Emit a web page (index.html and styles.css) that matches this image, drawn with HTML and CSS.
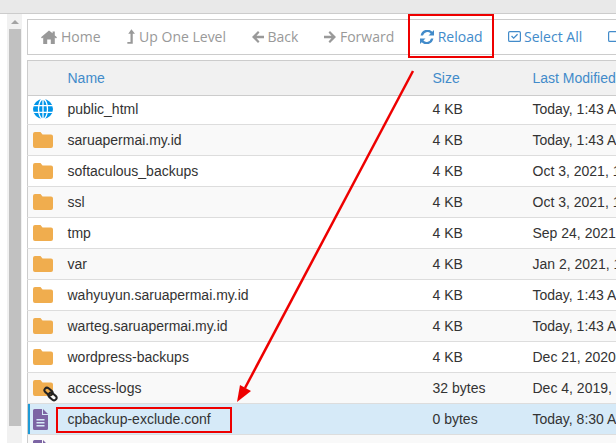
FILE: index.html
```html
<!DOCTYPE html>
<html lang="en">
<head>
    <meta charset="UTF-8">
    <title>File Manager</title>
    <link rel="stylesheet" href="styles.css">
</head>
<body>
    <svg class="defs" width="0" height="0">
        <symbol id="folder" viewBox="0 0 20 16">
            <path d="M2 0h5.500l2 2.500H18a2 2 0 0 1 2 2V14a2 2 0 0 1-2 2H2a2 2 0 0 1-2-2V2a2 2 0 0 1 2-2z"/>
        </symbol>
        <symbol id="file" viewBox="0 0 15 21">
            <path d="M1.500 0H9v6h6v13.500a1.500 1.500 0 0 1-1.500 1.500h-12A1.500 1.500 0 0 1 0 19.500v-18A1.500 1.500 0 0 1 1.500 0zM10 0l5 5h-5zM3.500 10v1.500h8V10zm0 3v1.500h8V13zm0 3v1.500h8V16z" fill-rule="evenodd"/>
        </symbol>
    </svg>
    <div class="top-strip"></div>
    <div class="page">
        <div class="scroll-track">
            <div class="scroll-arrow"></div>
            <div class="scroll-thumb"></div>
        </div>
        <div class="main">
            <div class="toolbar">
                <span class="tool">
                    <svg class="tool-icon home" viewBox="0 0 16 14"><path d="M8 0.500L0 7.300l1 1.100 1.200-1V14h4V9.500h3.600V14h4V7.400l1.200 1 1-1.100-2.200-1.900V1.500h-2.200v1.700z"/></svg>
                    Home
                </span>
                <span class="tool">
                    <svg class="tool-icon up" viewBox="0 0 10 16"><path d="M6 0L10 5H7.500v11H1.500v-2H5V5H2.500z"/></svg>
                    Up One Level
                </span>
                <span class="tool">
                    <svg class="tool-icon arrow-icon" viewBox="0 0 12 12"><path d="M6 0l1.500 1.500L4.500 4.800H12v2.400H4.500l3 3.300L6 12 0 6z"/></svg>
                    Back
                </span>
                <span class="tool">
                    <svg class="tool-icon arrow-icon" viewBox="0 0 12 12"><path d="M6 0L4.500 1.500l3 3.300H0v2.400h7.500l-3 3.300L6 12l6-6z"/></svg>
                    Forward
                </span>
                <span class="tool active">
                    <svg class="tool-icon reload" viewBox="0 0 14 14"><path d="M14 0v5.500H8.500l2.100-2.100A4.500 4.500 0 0 0 3 5.500H.6A7 7 0 0 1 12.300 1.700zM0 14V8.500h5.500l-2.100 2.100A4.500 4.500 0 0 0 11 8.500h2.400A7 7 0 0 1 1.700 12.300z"/></svg>
                    Reload
                </span>
                <span class="tool active">
                    <svg class="tool-icon check" viewBox="0 0 14 14"><path d="M2 1h10a2 2 0 0 1 2 2v8a2 2 0 0 1-2 2H2a2 2 0 0 1-2-2V3a2 2 0 0 1 2-2zm0 1.300a.7.7 0 0 0-.7.7v8c0 .4.300.7.700.7h10c.4 0 .7-.3.7-.7V3a.7.7 0 0 0-.7-.7zM3.300 7l1-1 1.800 1.800L9.800 4l1 1-4.700 4.800z" fill-rule="evenodd"/></svg>
                    Select All
                </span>
                <span class="tool active">
                    <svg class="tool-icon check" viewBox="0 0 14 14"><path d="M2 1h10a2 2 0 0 1 2 2v8a2 2 0 0 1-2 2H2a2 2 0 0 1-2-2V3a2 2 0 0 1 2-2zm0 1.300a.7.7 0 0 0-.7.7v8c0 .4.300.7.700.7h10c.4 0 .7-.3.7-.7V3a.7.7 0 0 0-.7-.7z" fill-rule="evenodd"/></svg>
                    Unselect All
                </span>
            </div>

            <table class="files">
                <colgroup>
                    <col class="col-icon">
                    <col class="col-name">
                    <col class="col-size">
                    <col class="col-date">
                </colgroup>
                <thead>
                    <tr>
                        <th></th>
                        <th>Name</th>
                        <th>Size</th>
                        <th>Last Modified</th>
                    </tr>
                </thead>
                <tbody>
                    <tr class="first-row">
                        <td class="icon-cell">
                            <svg class="icon globe" viewBox="0 0 20 20">
                                <circle cx="10" cy="10" r="10"/>
                                <path d="M10 0v20M0 6.700h20M0 13.300h20" class="globe-line"/>
                                <ellipse cx="10" cy="10" rx="4.500" ry="10" class="globe-line"/>
                            </svg>
                        </td>
                        <td>public_html</td><td>4 KB</td><td>Today, 1:43 AM</td>
                    </tr>
                    <tr>
                        <td class="icon-cell"><svg class="icon folder"><use href="#folder"/></svg></td>
                        <td>saruapermai.my.id</td><td>4 KB</td><td>Today, 1:43 AM</td>
                    </tr>
                    <tr>
                        <td class="icon-cell"><svg class="icon folder"><use href="#folder"/></svg></td>
                        <td>softaculous_backups</td><td>4 KB</td><td>Oct 3, 2021, 1:21 PM</td>
                    </tr>
                    <tr>
                        <td class="icon-cell"><svg class="icon folder"><use href="#folder"/></svg></td>
                        <td>ssl</td><td>4 KB</td><td>Oct 3, 2021, 1:21 PM</td>
                    </tr>
                    <tr>
                        <td class="icon-cell"><svg class="icon folder"><use href="#folder"/></svg></td>
                        <td>tmp</td><td>4 KB</td><td>Sep 24, 2021, 9:12 PM</td>
                    </tr>
                    <tr>
                        <td class="icon-cell"><svg class="icon folder"><use href="#folder"/></svg></td>
                        <td>var</td><td>4 KB</td><td>Jan 2, 2021, 1:05 AM</td>
                    </tr>
                    <tr>
                        <td class="icon-cell"><svg class="icon folder"><use href="#folder"/></svg></td>
                        <td>wahyuyun.saruapermai.my.id</td><td>4 KB</td><td>Today, 1:43 AM</td>
                    </tr>
                    <tr>
                        <td class="icon-cell"><svg class="icon folder"><use href="#folder"/></svg></td>
                        <td>warteg.saruapermai.my.id</td><td>4 KB</td><td>Today, 1:43 AM</td>
                    </tr>
                    <tr>
                        <td class="icon-cell"><svg class="icon folder"><use href="#folder"/></svg></td>
                        <td>wordpress-backups</td><td>4 KB</td><td>Dec 21, 2020, 3:10 PM</td>
                    </tr>
                    <tr>
                        <td class="icon-cell">
                            <svg class="icon folder"><use href="#folder"/></svg>
                            <svg class="link-badge" viewBox="0 0 15 16">
                                <rect x="1" y="3" width="9" height="5" rx="2.500" transform="rotate(40 5.500 5.500)"/>
                                <rect x="5" y="8" width="9" height="5" rx="2.500" transform="rotate(40 9.500 10.500)"/>
                            </svg>
                        </td>
                        <td>access-logs</td><td>32 bytes</td><td>Dec 4, 2019, 7:48 PM</td>
                    </tr>
                    <tr class="selected">
                        <td class="icon-cell"><svg class="icon file"><use href="#file"/></svg></td>
                        <td>cpbackup-exclude.conf</td><td>0 bytes</td><td>Today, 8:30 AM</td>
                    </tr>
                    <tr>
                        <td class="icon-cell"><svg class="icon file"><use href="#file"/></svg></td>
                        <td></td><td></td><td></td>
                    </tr>
                </tbody>
            </table>
        </div>
    </div>

    <!-- red annotations drawn on top of the screenshot -->
    <div class="mark mark-reload"></div>
    <div class="mark mark-file"></div>
    <svg class="arrow" width="616" height="443" viewBox="0 0 616 443">
        <path d="M413 71L245 388" class="arrow-line"/>
        <path d="M237 402L240 385L251 391z" class="arrow-head"/>
    </svg>
</body>
</html>
```

FILE: styles.css
```css
html, body {
    height: 100%;
}

body {
    margin: 0;
    background: #fff;
    font-family: "Liberation Sans", Arial, sans-serif;
    font-size: 14px;
    color: #333;
    overflow: hidden;
    position: relative;
}

.defs {
    position: absolute;
}

.top-strip {
    height: 13px;
    background: #e9e9e9;
    border-bottom: 1px solid #ccc;
}

.page {
    display: flex;
    padding: 5px 0 0 7px;
    height: 424px;
    box-sizing: border-box;
}

.scroll-track {
    width: 15px;
    height: 429px;
    margin-top: -5px;
    background: #f1f1f1;
    flex-shrink: 0;
    padding: 0 1px 0 2px;
    box-sizing: border-box;
}

.scroll-arrow {
    width: 0;
    height: 0;
    margin: 6px auto 5px;
    border-left: 4px solid transparent;
    border-right: 4px solid transparent;
    border-bottom: 4px solid #a3a3a3;
}

.scroll-thumb {
    height: 397px;
    background: #c1c1c1;
}

.main {
    margin-left: 5px;
    width: 700px;
    flex-shrink: 0;
}

.toolbar {
    height: 33px;
    border: 1px solid #ccc;
    border-right: none;
    display: flex;
    align-items: center;
    padding: 0 0 1px 13px;
    font-family: "Open Sans", sans-serif;
    color: #999;
    white-space: nowrap;
}

.tool {
    display: flex;
    align-items: center;
    gap: 4px;
    margin-right: 25.500px;
}

.tool.active {
    color: #428bca;
}

.tool-icon {
    fill: currentColor;
    height: 14px;
}

.tool-icon.home { width: 16px; }
.tool-icon.up { width: 9px; height: 15px; }
.tool-icon.arrow-icon { width: 12px; height: 12px; }
.tool-icon.reload { width: 14px; height: 14px; }
.tool-icon.check { width: 13px; height: 13px; margin-right: -1px; }

.files {
    margin-top: 5px;
    width: 700px;
    table-layout: fixed;
    border-collapse: collapse;
    border: 1px solid #ccc;
    border-right: none;
}

.col-icon { width: 30px; }
.col-name { width: 365px; }
.col-size { width: 100px; }

.files th {
    height: 34px;
    padding: 0 0 0 10px;
    background: #f1f1f1;
    border-bottom: 1px solid #ccc;
    color: #428bca;
    font-weight: normal;
    text-align: left;
}

.files td {
    height: 30px;
    padding: 0 0 0 10px;
    border-bottom: 1px solid #ddd;
    white-space: nowrap;
    overflow: hidden;
}

.files tr.first-row td {
    height: 26px;
    padding-bottom: 2px;
}

.files tbody tr:nth-child(even) {
    background: #f9f9f9;
}

.files td.icon-cell {
    padding-left: 5px;
    position: relative;
    overflow: visible;
}

.files tr.selected {
    background: #d6eaf8;
}

.files tr.selected td.icon-cell {
    box-shadow: inset 2px 0 0 #1e9ad6;
}

.icon {
    display: block;
}

.globe {
    width: 20px;
    height: 20px;
    fill: #0095e8;
}

.globe-line {
    fill: none;
    stroke: #fff;
    stroke-width: 1.300;
}

.folder {
    width: 20px;
    height: 16px;
    fill: #f0ad4e;
}

.file {
    width: 15px;
    height: 21px;
    fill: #7c64a4;
}

.link-badge {
    position: absolute;
    left: 15px;
    top: 13px;
    width: 15px;
    height: 16px;
    fill: none;
    stroke: #222;
    stroke-width: 2;
}

.mark {
    position: absolute;
    border: 2px solid #ee0000;
    box-sizing: border-box;
}

.mark-reload {
    left: 408px;
    top: 14px;
    width: 86px;
    height: 44px;
}

.mark-file {
    left: 56px;
    top: 407px;
    width: 176px;
    height: 26px;
}

.arrow {
    position: absolute;
    left: 0;
    top: 0;
    pointer-events: none;
}

.arrow-line {
    stroke: #ee0000;
    stroke-width: 2.500;
    fill: none;
}

.arrow-head {
    fill: #ee0000;
}
```
